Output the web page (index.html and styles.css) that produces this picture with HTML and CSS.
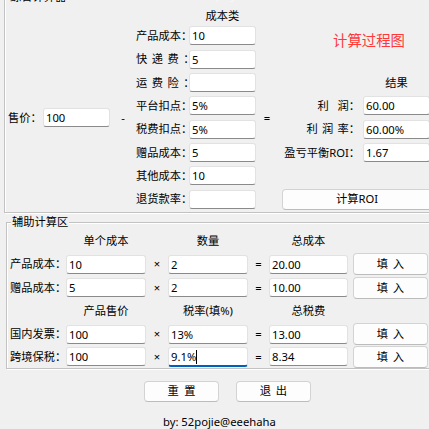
FILE: index.html
```html
<!DOCTYPE html>
<html lang="zh-CN">
<head>
<meta charset="utf-8">
<title>综合计算器</title>
<link rel="stylesheet" href="styles.css">
</head>
<body>
<div class="group g1">
  <span class="gtitle">综合计算器</span>
  <span class="watermark">www.52pojie.cn</span>
  <div class="g1grid">
    <div class="hdr r1 cE">成本类</div>
    <div class="proc">计算过程图</div>

    <div class="lbl r5s cA">售价：</div>
    <div class="r5s cB"><input class="fld" value="100"></div>
    <div class="op r5s cC">-</div>
    <div class="op r5s cF">=</div>

    <div class="lbl r2 cD">产品成本：</div>
    <div class="r2 cE"><input class="fld" value="10"></div>
    <div class="lbl r3 cD"><span class="ls">快递费</span>：</div>
    <div class="r3 cE"><input class="fld" value="5"></div>
    <div class="lbl r4 cD"><span class="ls">运费险</span>：</div>
    <div class="r4 cE"><input class="fld" value=""></div>
    <div class="lbl r5 cD">平台扣点：</div>
    <div class="r5 cE"><input class="fld" value="5%"></div>
    <div class="lbl r6 cD">税费扣点：</div>
    <div class="r6 cE"><input class="fld" value="5%"></div>
    <div class="lbl r7 cD">赠品成本：</div>
    <div class="r7 cE"><input class="fld" value="5"></div>
    <div class="lbl r8 cD">其他成本：</div>
    <div class="r8 cE"><input class="fld" value="10"></div>
    <div class="lbl r9 cD">退货款率：</div>
    <div class="r9 cE"><input class="fld" value=""></div>

    <div class="hdr r4 cH">结果</div>
    <div class="rlbl r5 cG">利<i class="gapw"></i>润：</div>
    <div class="r5 cH"><input class="fld" value="60.00"></div>
    <div class="rlbl r6 cG">利<i class="gapn"></i>润<i class="gapn"></i>率：</div>
    <div class="r6 cH"><input class="fld" value="60.00%"></div>
    <div class="rlbl r7 cG">盈亏平衡ROI：</div>
    <div class="r7 cH"><input class="fld" value="1.67"></div>
    <div class="r9 cGH"><button class="btn roi">计算ROI</button></div>
  </div>
</div>

<div class="group g2">
  <span class="gtitle">辅助计算区</span>
  <div class="g2grid">
    <div class="hdr k1 k2c">单个成本</div>
    <div class="hdr k1 k4c">数量</div>
    <div class="hdr k1 k6c">总成本</div>

    <div class="lbl k2 k1c">产品成本：</div>
    <div class="k2 k2c"><input class="fld" value="10"></div>
    <div class="op k2 k3c">×</div>
    <div class="k2 k4c"><input class="fld" value="2"></div>
    <div class="op k2 k5c">=</div>
    <div class="k2 k6c"><input class="fld" value="20.00"></div>
    <div class="k2 k8c"><button class="btn fill"><span class="bls">填入</span></button></div>

    <div class="lbl k3 k1c">赠品成本：</div>
    <div class="k3 k2c"><input class="fld" value="5"></div>
    <div class="op k3 k3c">×</div>
    <div class="k3 k4c"><input class="fld" value="2"></div>
    <div class="op k3 k5c">=</div>
    <div class="k3 k6c"><input class="fld" value="10.00"></div>
    <div class="k3 k8c"><button class="btn fill"><span class="bls">填入</span></button></div>

    <div class="hdr k4 k2c">产品售价</div>
    <div class="hdr k4 k4c">税率(填%)</div>
    <div class="hdr k4 k6c">总税费</div>

    <div class="lbl k5 k1c">国内发票：</div>
    <div class="k5 k2c"><input class="fld" value="100"></div>
    <div class="op k5 k3c">×</div>
    <div class="k5 k4c"><input class="fld" value="13%"></div>
    <div class="op k5 k5c">=</div>
    <div class="k5 k6c"><input class="fld" value="13.00"></div>
    <div class="k5 k8c"><button class="btn fill"><span class="bls">填入</span></button></div>

    <div class="lbl k6 k1c">跨境保税：</div>
    <div class="k6 k2c"><input class="fld" value="100"></div>
    <div class="op k6 k3c">×</div>
    <div class="k6 k4c focus-wrap"><input class="fld focused" value="9.1%"><span class="caret"></span></div>
    <div class="op k6 k5c">=</div>
    <div class="k6 k6c"><input class="fld" value="8.34"></div>
    <div class="k6 k8c"><button class="btn fill"><span class="bls">填入</span></button></div>
  </div>
</div>

<div class="actions">
  <button class="btn act"><span class="bls-w">重置</span></button>
  <button class="btn act"><span class="bls">退出</span></button>
</div>
<div class="by">by: 52pojie@eeehaha</div>
</body>
</html>
```

FILE: styles.css
```css
html, body {
  margin: 0;
  padding: 0;
  overflow: hidden;
  background: #f0f0f0;
}
body {
  width: 429px;
  height: 429px;
  font-family: "Noto Sans", "Noto Sans CJK SC", sans-serif;
  font-size: 11.25px;
  line-height: 16px;
  color: #000;
}

.group {
  position: relative;
  box-sizing: border-box;
  border: 1px solid #c2c2c2;
  box-shadow: inset 1px 1px 0 #fff, 1px 1px 0 #fff;
  width: 440px;
}
.g1 {
  margin: -3px 0 0 4px;
  padding: 9.67px 0 1px 3px;
}
.g2 {
  margin: 9px 0 0 6px;
  padding: 6.33px 0 0 3px;
}
.gtitle {
  position: absolute;
  top: -8px;
  left: 4px;
  padding: 0 1px;
  line-height: 14px;
  background: #f0f0f0;
}
.watermark {
  position: absolute;
  top: -11px;
  left: 162px;
  font-size: 13px;
  line-height: 14px;
  color: #f8f8f8;
}

.g1grid {
  display: grid;
  grid-template-columns: 35px 67px 26px 53px 67px 22px 85px 67px;
  grid-template-rows: 16.67px repeat(8, 23.33px);
  align-items: center;
}
.g2grid {
  display: grid;
  grid-template-columns: 56px 80px 22px 80px 21px 79px 5px 75px;
  grid-template-rows: repeat(5, 23.33px) 22px;
  align-items: center;
}

.r1 { grid-row: 1; }
.r2 { grid-row: 2; }
.r3 { grid-row: 3; }
.r4 { grid-row: 4; }
.r5 { grid-row: 5; }
.r6 { grid-row: 6; }
.r7 { grid-row: 7; }
.r8 { grid-row: 8; }
.r9 { grid-row: 9; }
.r5s { grid-row: 5 / span 2; }
.cA { grid-column: 1; }
.cB { grid-column: 2; }
.cC { grid-column: 3; }
.cD { grid-column: 4; }
.cE { grid-column: 5; }
.cF { grid-column: 6; }
.cG { grid-column: 7; }
.cH { grid-column: 8; }
.cGH { grid-column: 7 / span 2; }

.k1 { grid-row: 1; }
.k2 { grid-row: 2; }
.k3 { grid-row: 3; }
.k4 { grid-row: 4; }
.k5 { grid-row: 5; }
.k6 { grid-row: 6; }
.k1c { grid-column: 1; }
.k2c { grid-column: 2; }
.k3c { grid-column: 3; }
.k4c { grid-column: 4; }
.k5c { grid-column: 5; }
.k6c { grid-column: 6; }
.k8c { grid-column: 8; }

.hdr {
  text-align: center;
  white-space: nowrap;
}
.proc {
  grid-row: 1 / span 2;
  grid-column: 7 / span 2;
  align-self: end;
  justify-self: start;
  margin: 0 0 -3px 55px;
  font-size: 14.4px;
  line-height: 20px;
  color: #ff3838;
  white-space: nowrap;
}
.lbl {
  white-space: nowrap;
}
.rlbl {
  white-space: nowrap;
  text-align: right;
  padding-right: 3px;
}
.ls {
  letter-spacing: 4.5px;
}
.gapn {
  display: inline-block;
  width: 4.25px;
}
.gapw {
  display: inline-block;
  width: 8.75px;
}
.op {
  text-align: center;
}

.fld {
  display: block;
  box-sizing: border-box;
  width: 100%;
  height: 19px;
  margin: 0;
  padding: 0 2px;
  border: 1px solid #e2e2e2;
  border-bottom-color: #8a8a8a;
  border-radius: 3px;
  background: #fff;
  font: inherit;
  line-height: 17px;
  color: #000;
  outline: none;
}
.focused {
  height: 20px;
  border-bottom: 2px solid #005fb8;
}
.focus-wrap {
  position: relative;
}
.caret {
  position: absolute;
  left: 28px;
  top: 3px;
  width: 1px;
  height: 14px;
  background: #000;
}

.btn {
  box-sizing: border-box;
  margin: 0;
  padding: 0;
  border: 1px solid #d3d3d3;
  border-bottom-color: #bcbcbc;
  border-radius: 4px;
  background: #fdfdfd;
  font: inherit;
  line-height: 16px;
  color: #000;
  white-space: nowrap;
}
.bls {
  letter-spacing: 4.75px;
  padding-left: 4.75px;
}
.bls-w {
  letter-spacing: 5.4px;
  padding-left: 5.4px;
}
.roi {
  display: block;
  width: 150px;
  height: 21px;
  margin-left: 4px;
}
.fill {
  display: block;
  width: 75px;
  height: 22px;
}
.actions {
  display: flex;
  gap: 17px;
  margin: 12px 0 0 144px;
}
.act {
  width: 75px;
  height: 21px;
}
.by {
  margin: 12px 0 0 163px;
  line-height: 16px;
  white-space: nowrap;
}
```
